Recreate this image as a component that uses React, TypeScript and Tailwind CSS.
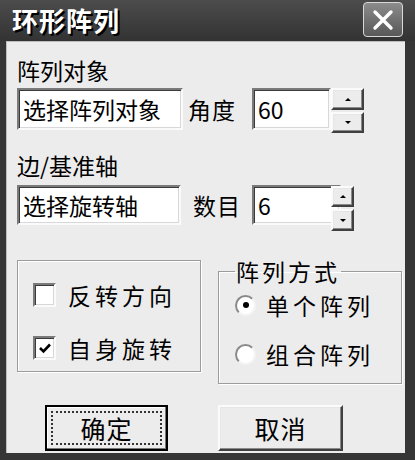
import React from "react";

const FONT = { fontFamily: '"Noto Sans CJK SC", "Noto Sans", sans-serif' };

const sunken =
  "border-2 border-t-[#7a7a7a] border-l-[#7a7a7a] border-b-[#fafafa] border-r-[#fafafa] shadow-[inset_1px_1px_0_#3a3a3a,inset_-1px_-1px_0_#d8d8d8]";
const raised =
  "border-2 border-t-[#fbfbfb] border-l-[#fbfbfb] border-b-[#404040] border-r-[#404040] shadow-[inset_-1px_-1px_0_#8a8a8a,inset_1px_1px_0_#e6e6e6]";

function Spin({ upH, downH }: { upH: string; downH: string }) {
  return (
    <div className="flex flex-col gap-[2px] w-[33px]">
      <div className={`${raised} ${upH} bg-[#ececec] flex items-center justify-center`}>
        <span className="block w-0 h-0 border-l-[3px] border-r-[3px] border-b-[3px] border-l-transparent border-r-transparent border-b-black" />
      </div>
      <div className={`${raised} ${downH} bg-[#ececec] flex items-center justify-center`}>
        <span className="block w-0 h-0 border-l-[3px] border-r-[3px] border-t-[3px] border-l-transparent border-r-transparent border-t-black" />
      </div>
    </div>
  );
}

function Check({ checked, label }: { checked?: boolean; label: string }) {
  return (
    <div className="flex items-center h-[26px]">
      <div className={`${sunken} w-[23px] h-[24px] bg-white flex items-center justify-center`}>
        {checked && (
          <svg width="14" height="12" viewBox="0 0 14 12">
            <path d="M2 6 L5.5 9.5 L12 2.5" stroke="#000" strokeWidth="2.6" fill="none" />
          </svg>
        )}
      </div>
      <span className="ml-[12px] text-[23px] leading-[26px] tracking-[4px] text-black">{label}</span>
    </div>
  );
}

function Radio({ checked, label }: { checked?: boolean; label: string }) {
  return (
    <div className="flex items-center h-[26px]">
      <div className="w-[21px] h-[21px] rounded-full bg-white border-2 border-t-[#8a8a8a] border-l-[#8a8a8a] border-b-[#f4f4f4] border-r-[#f4f4f4] flex items-center justify-center">
        {checked && <span className="block w-[6px] h-[6px] rounded-full bg-black" />}
      </div>
      <span className="ml-[10px] text-[23px] leading-[26px] tracking-[4px] text-black">{label}</span>
    </div>
  );
}

export default function App() {
  return (
    <div className="w-[415px] h-[460px] bg-[#363636] flex flex-col overflow-hidden" style={FONT}>
      {/* title bar */}
      <div className="h-[41px] flex items-start justify-between bg-gradient-to-b from-[#4c4c4c] to-[#333333]">
        <div className="ml-[12px] mt-[5px] text-[26px] leading-[30px] font-bold text-white tracking-[1px] [text-shadow:2px_2px_0_#000]">
          环形阵列
        </div>
        <div className="mr-[12px] mt-[2px] w-[40px] h-[35px] rounded-[4px] border border-[#d8d8d8] bg-gradient-to-b from-[#8c8c8c] to-[#585858] flex items-center justify-center">
          <svg width="22" height="22" viewBox="0 0 22 22">
            <path d="M3 3 L19 19 M19 3 L3 19" stroke="#fff" strokeWidth="3.4" strokeLinecap="round" />
          </svg>
        </div>
      </div>

      {/* body */}
      <div className="ml-[6px] mr-[10px] h-[412px] bg-[#ececec] border-l border-t border-[#bdbdbd] pl-[10px] flex flex-col">
        <div className="mt-[15px] text-[23px] leading-[26px] text-black">阵列对象</div>

        <div className="mt-[5px] flex items-start">
          <div className={`${sunken} w-[166px] h-[42px] bg-white pl-[4px] text-[23px] leading-[38px] text-black`}>
            选择阵列对象
          </div>
          <div className="w-[69px] pl-[5px] h-[42px] text-[23px] leading-[42px] tracking-[1px] text-black">角度</div>
          <div className={`${sunken} w-[79px] h-[42px] bg-white pl-[4px] text-[23px] leading-[38px] text-black`}>60</div>
          <Spin upH="h-[22px]" downH="h-[21px]" />
        </div>

        <div className="mt-[19px] text-[23px] leading-[26px] text-black">边/基准轴</div>

        <div className="mt-[7px] flex items-start">
          <div className={`${sunken} w-[164px] h-[40px] bg-white pl-[4px] text-[23px] leading-[36px] text-black`}>
            选择旋转轴
          </div>
          <div className="w-[71px] pl-[12px] h-[40px] text-[23px] leading-[40px] tracking-[1px] text-black">数目</div>
          <div className={`${sunken} w-[89px] h-[40px] bg-white pl-[4px] text-[23px] leading-[36px] text-black`}>6</div>
          <Spin upH="h-[21px] mt-[1px] w-[23px] ml-[-10px]" downH="h-[22px] w-[23px] ml-[-10px]" />
        </div>

        <div className="mt-[29px] flex items-start">
          <div className="w-[184px] h-[112px] border border-[#9c9c9c] shadow-[inset_1px_1px_0_#fff,1px_1px_0_#fff] flex flex-col pl-[15px] pt-[21px] gap-[27px]">
            <Check label="反转方向" />
            <Check checked label="自身旋转" />
          </div>
          <fieldset className="ml-[17px] w-[184px] h-[124px] border border-[#9c9c9c] shadow-[inset_1px_1px_0_#fff,1px_1px_0_#fff] pl-[16px] pr-0">
            <legend className="ml-[0px] px-[1px] text-[23px] leading-[22px] tracking-[3px] text-black">阵列方式</legend>
            <div className="flex flex-col pt-[10px] gap-[23px]">
              <Radio checked label="单个阵列" />
              <Radio label="组合阵列" />
            </div>
          </fieldset>
        </div>

        <div className="mt-[21px] flex items-start">
          <div className="ml-[28px] w-[123px] h-[46px] border-2 border-black bg-[#ececec] p-[4px] shadow-[inset_-1px_-1px_0_#777,inset_1px_1px_0_#fff]">
            <div className="w-full h-full border-2 border-dotted border-[#333] flex items-center justify-center text-[25px] leading-[28px] tracking-[1px] text-black">
              确定
            </div>
          </div>
          <div className={`${raised} ml-[50px] w-[125px] h-[46px] bg-[#ececec] flex items-center justify-center text-[25px] leading-[28px] tracking-[1px] text-black`}>
            取消
          </div>
        </div>
      </div>
    </div>
  );
}
